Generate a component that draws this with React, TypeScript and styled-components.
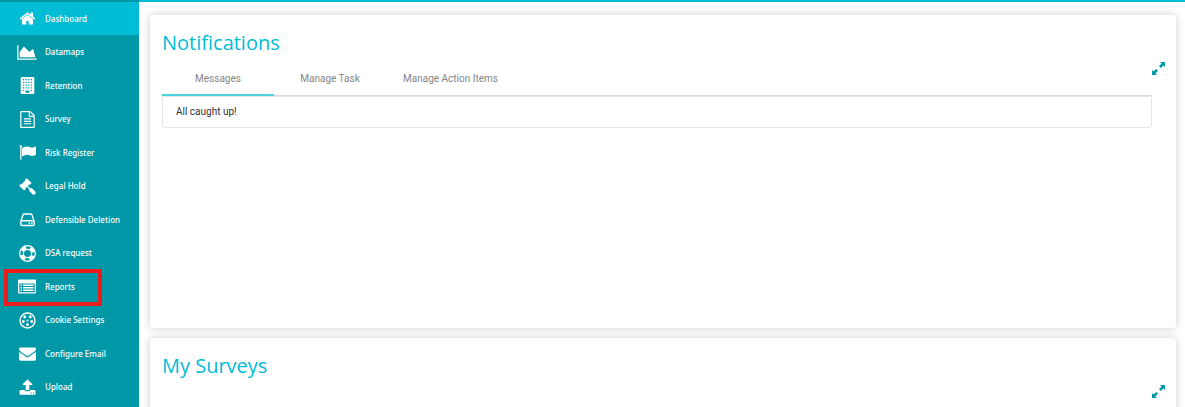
import React from "react";
import styled, { createGlobalStyle } from "styled-components";

const GlobalStyle = createGlobalStyle`
  *, *::before, *::after { box-sizing: border-box; }
  html, body { margin: 0; background: #fff; }
  body { font-family: Roboto, "Liberation Sans", sans-serif; font-size: 10px; overflow: hidden; }
`;

const Page = styled.div`
  display: grid;
  grid-template-columns: 139px minmax(0, 1fr);
  height: 100vh;
  overflow: hidden;
`;

const Sidebar = styled.nav`
  background: #0097a7;
  padding-top: 2px;
`;

const Menu = styled.ul`
  display: grid;
  grid-auto-rows: 33px 34px;
  list-style: none;
  margin: 0;
  padding: 0;
`;

const MenuItem = styled.li`
  display: grid;
  position: relative;
`;

const MenuLink = styled.a<{ $active?: boolean }>`
  display: grid;
  grid-template-columns: 20px 1fr;
  column-gap: 8px;
  align-items: center;
  padding-left: 17px;
  background: ${(p) => (p.$active ? "#00bcd4" : "transparent")};
  color: #fff;
  font-family: "Noto Sans", "Open Sans", sans-serif;
  font-size: 8px;
  font-weight: 500;
  line-height: 12px;
  text-decoration: none;
  white-space: nowrap;
`;

const Glyph = styled.svg<{ $wide?: boolean }>`
  width: ${(p) => (p.$wide ? 20 : 17)}px;
  height: 17px;
  justify-self: center;
  fill: #fff;
`;

const Highlight = styled.span`
  position: absolute;
  left: 4px;
  top: -1px;
  width: 98px;
  height: 37px;
  border: 4px solid #ed1c1c;
  pointer-events: none;
`;

const Main = styled.main`
  display: flex;
  flex-direction: column;
  gap: 10px;
  padding: 13px 9px 0 11px;
  border-top: 2px solid #00bcd4;
`;

const Card = styled.section`
  display: grid;
  grid-template-columns: minmax(0, 1fr) 24px;
  grid-template-rows: auto 1fr;
  flex: none;
  min-height: 313px;
  padding-left: 12px;
  background: #fff;
  border-radius: 3px;
  box-shadow: 0 0 8px rgba(0, 0, 0, 0.2);
`;

const CardTitle = styled.h2`
  grid-column: 1 / -1;
  margin: 0;
  padding-top: 14px;
  color: #00bcd4;
  font-family: "Open Sans", "Noto Sans", sans-serif;
  font-size: 20px;
  font-weight: 400;
  line-height: 28px;
`;

const Tabs = styled.div`
  display: flex;
  margin-top: 5px;
  border-bottom: 1px solid #dcdcdc;
`;

const Tab = styled.button<{ $active?: boolean }>`
  min-width: 112px;
  height: 34px;
  margin-bottom: -1px;
  padding: 2px 17px 0;
  border: 0;
  border-bottom: 2px solid ${(p) => (p.$active ? "#4dd0e1" : "transparent")};
  background: none;
  color: #858585;
  font-family: inherit;
  font-size: 10px;
  line-height: 16px;
`;

const Message = styled.p`
  margin: 0;
  padding: 7px 13px;
  border: 1px solid #e6e6e6;
  border-radius: 0 0 3px 3px;
  color: #333;
  line-height: 16px;
`;

const ExpandButton = styled.button`
  grid-column: 2;
  align-self: start;
  width: 13px;
  height: 13px;
  margin-top: 5px;
  padding: 0;
  border: 0;
  background: none;
`;

const ExpandGlyph = styled.svg`
  display: block;
  width: 13px;
  height: 13px;
  fill: #0097a7;
`;

const icons: Record<string, { box: string; wide?: boolean; art: React.ReactNode }> = {
  home: {
    box: "0 0 1792 1792",
    art: <path d="M1472 992v480q0 26-19 45t-45 19h-384v-384h-256v384h-384q-26 0-45-19t-19-45v-480q0-1 .5-3t.5-3l575-474 575 474q1 2 1 6zm223-69l-62 74q-8 9-21 11h-3q-13 0-21-7l-692-577-692 577q-12 8-24 7-13-2-21-11l-62-74q-8-10-7-23.5t11-21.5l719-599q32-26 76-26t76 26l244 204v-195q0-14 9-23t23-9h192q14 0 23 9t9 23v408l219 182q10 8 11 21.5t-7 23.5z" />,
  },
  chart: {
    box: "0 0 2048 1792",
    wide: true,
    art: <path d="M2048 1536v128h-2048v-1536h128v1408h1920zm-384-1024l256 896h-1664v-576l448-576 576 576z" />,
  },
  building: {
    box: "0 0 17 17",
    art: (
      <>
        <path
          fillRule="evenodd"
          d="M2.500 0h12a.8.8 0 0 1 .8.8v15.400a.8.8 0 0 1-.8.8h-12a.8.8 0 0 1-.8-.8V.8a.8.8 0 0 1 .8-.8zM6.600 13.600v2.200h3.800v-2.200z"
        />
        <path
          d="M4 2.700h9.500M4 5.400h9.500M4 8.100h9.500M4 10.800h9.500M4 13.500h1.200M11.800 13.500h1.200"
          fill="none"
          stroke="#0097a7"
          strokeWidth="1.200"
          strokeDasharray="1.200 1.400"
        />
      </>
    ),
  },
  file: {
    box: "0 0 1792 1792",
    art: <path d="M1596 380q28 28 48 76t20 88v1152q0 40-28 68t-68 28h-1344q-40 0-68-28t-28-68v-1600q0-40 28-68t68-28h896q40 0 88 20t76 48zm-444-244v376h376q-10-29-22-41l-313-313q-12-12-41-22zm384 1528v-1024h-416q-40 0-68-28t-28-68v-416h-768v1536h1280zm-1024-864q0-14 9-23t23-9h704q14 0 23 9t9 23v64q0 14-9 23t-23 9h-704q-14 0-23-9t-9-23v-64zm736 224q14 0 23 9t9 23v64q0 14-9 23t-23 9h-704q-14 0-23-9t-9-23v-64q0-14 9-23t23-9h704zm0 256q14 0 23 9t9 23v64q0 14-9 23t-23 9h-704q-14 0-23-9t-9-23v-64q0-14 9-23t23-9h704z" />,
  },
  flag: {
    box: "0 0 1792 1792",
    art: <path d="M320 256q0 72-64 110v1266q0 13-9.500 22.500t-22.500 9.500h-64q-13 0-22.500-9.500t-9.500-22.500v-1266q-64-38-64-110 0-53 37.500-90.500t90.500-37.500 90.500 37.500 37.500 90.500zm1472 64v763q0 25-12.500 38.500t-39.500 27.500q-215 116-369 116-61 0-123.500-22t-108.500-48-115.500-48-142.500-22q-192 0-464 146-17 9-33 9-26 0-45-19t-19-45v-742q0-32 31-55 21-14 79-43 236-120 421-120 107 0 200 29t219 88q38 19 88 19 54 0 117.500-21t110-47 88-47 54.500-21q26 0 45 19t19 45z" />,
  },
  gavel: {
    box: "0 0 1792 1792",
    art: <path d="M1771 1536q0 53-37 90l-107 108q-39 37-91 37-53 0-90-37l-363-364q-38-36-38-90 0-53 43-96l-256-256-126 126q-14 14-34 14t-34-14q2 2 12.500 12t12.500 13 10 11.500 10 13.500 6 13.500 5.500 16.500 1.500 18q0 38-28 68-3 3-16.500 18t-19 20.500-18.500 16.500-22 15.500-22 9-26 4.500q-40 0-68-28l-408-408q-28-28-28-68 0-13 4.500-26t9-22 15.500-22 16.500-18.500 20.500-19 18-16.500q30-28 68-28 10 0 18 1.500t16.500 5.500 13.500 6 13.500 10 11.500 10 13 12.500 12 12.500q-14-14-14-34t14-34l348-348q14-14 34-14t34 14q-2-2-12.500-12t-12.500-13-10-11.500-10-13.500-6-13.500-5.500-16.500-1.500-18q0-38 28-68 3-3 16.500-18t19-20.500 18.500-16.500 22-15.500 22-9 26-4.500q40 0 68 28l408 408q28 28 28 68 0 13-4.500 26t-9 22-15.500 22-16.500 18.500-20.500 19-18 16.500q-30 28-68 28-10 0-18-1.500t-16.500-5.500-13.500-6-13.500-10-11.500-10-13-12.500-12-12.500q14 14 14 34t-14 34l-126 126 256 256q43-43 96-43 52 0 91 37l363 363q37 39 37 91z" />,
  },
  drive: {
    box: "0 0 17 17",
    art: (
      <>
        <path d="M1.900 10L4 3.900q.3-.9 1.200-.9h6.600q.9 0 1.200.9l2.100 6.100v3.500q0 1-1 1H2.900q-1 0-1-1zM2 9.800h13" fill="none" stroke="#fff" strokeWidth="1.400" />
        <circle cx="10.300" cy="12.100" r=".9" />
        <circle cx="12.800" cy="12.100" r=".9" />
      </>
    ),
  },
  ring: {
    box: "0 0 17 17",
    art: (
      <>
        <circle cx="8.500" cy="8.500" r="7.800" fill="none" stroke="#fff" strokeWidth="1.300" />
        <circle cx="8.500" cy="8.500" r="4.100" fill="none" stroke="#fff" strokeWidth="1.200" />
        <circle cx="8.500" cy="8.500" r="5.800" fill="none" stroke="#fff" strokeWidth="3.600" strokeDasharray="4.800 4.311" strokeDashoffset="-2.156" />
      </>
    ),
  },
  list: {
    box: "0 0 20 17",
    wide: true,
    art: (
      <>
        <path fillRule="evenodd" d="M2 1.500h16a1 1 0 0 1 1 1v12a1 1 0 0 1-1 1H2a1 1 0 0 1-1-1v-12a1 1 0 0 1 1-1zM2.300 5.500v8.700h15.400V5.500z" />
        <path d="M3.500 6.600H5V8H3.500zM6 6.600h10.500V8H6zM3.500 9.100H5v1.400H3.500zM6 9.100h10.500v1.400H6zM3.500 11.600H5V13H3.500zM6 11.600h10.500V13H6z" />
      </>
    ),
  },
  cookie: {
    box: "0 0 17 17",
    art: (
      <>
        <circle cx="8.500" cy="8.500" r="7.500" fill="none" stroke="#fff" strokeWidth="1.400" />
        <circle cx="8.500" cy="8.500" r="1" />
        <circle cx="5.700" cy="5" r="1.400" />
        <circle cx="11.300" cy="5" r="1.400" />
        <circle cx="4.300" cy="9.500" r="1.400" />
        <circle cx="12.700" cy="9.500" r="1.400" />
        <circle cx="8.500" cy="12.700" r="1.400" />
      </>
    ),
  },
  mail: {
    box: "0 0 1792 1792",
    art: <path d="M1792 710v794q0 66-47 113t-113 47h-1472q-66 0-113-47t-47-113v-794q44 49 101 87 362 246 497 345 57 42 92.500 65.500t94.500 48 110 24.500h2q51 0 110-24.500t94.500-48 92.500-65.500q170-123 498-345 57-39 100-87zm0-294q0 79-49 151t-122 123q-376 261-468 325-10 7-42.500 31t-54 38.500-52 32.500-57.500 27-50 9h-2q-23 0-50-9t-57.500-27-52-32.500-54-38.500-42.500-31q-91-64-262-182.500t-205-142.500q-62-42-117-115.500t-55-136.500q0-78 41.500-130t118.500-52h1472q65 0 112.500 47t47.500 113z" />,
  },
  upload: {
    box: "0 0 1792 1792",
    art: <path d="M1344 1472q0-26-19-45t-45-19-45 19-19 45 19 45 45 19 45-19 19-45zm256 0q0-26-19-45t-45-19-45 19-19 45 19 45 45 19 45-19 19-45zm128-224v320q0 40-28 68t-68 28h-1472q-40 0-68-28t-28-68v-320q0-40 28-68t68-28h427q21 56 70.500 92t110.500 36h256q61 0 110.500-36t70.500-92h427q40 0 68 28t28 68zm-325-648q-17 40-59 40h-256v448q0 26-19 45t-45 19h-256q-26 0-45-19t-19-45v-448h-256q-42 0-59-40-17-39 14-69l448-448q18-19 45-19t45 19l448 448q31 30 14 69z" />,
  },
};

const menu = [
  { label: "Dashboard", icon: "home", active: true },
  { label: "Datamaps", icon: "chart" },
  { label: "Retention", icon: "building" },
  { label: "Survey", icon: "file" },
  { label: "Risk Register", icon: "flag" },
  { label: "Legal Hold", icon: "gavel" },
  { label: "Defensible Deletion", icon: "drive" },
  { label: "DSA request", icon: "ring" },
  { label: "Reports", icon: "list", marked: true },
  { label: "Cookie Settings", icon: "cookie" },
  { label: "Configure Email", icon: "mail" },
  { label: "Upload", icon: "upload" },
];

const tabs = ["Messages", "Manage Task", "Manage Action Items"];

function Expand({ label }: { label: string }) {
  return (
    <ExpandButton type="button" aria-label={label}>
      <ExpandGlyph viewBox="0 0 13 13" aria-hidden="true">
        <path d="M8 0h5v5l-1.600-1.600-2.600 2.600-1.800-1.800 2.600-2.600zM0 13V8l1.600 1.600L4.200 7 6 8.800l-2.600 2.600L5 13z" />
      </ExpandGlyph>
    </ExpandButton>
  );
}

export default function App() {
  return (
    <>
      <GlobalStyle />
      <Page>
        <Sidebar>
          <Menu>
            {menu.map((item) => (
              <MenuItem key={item.label}>
                <MenuLink href="#" $active={item.active}>
                  <Glyph viewBox={icons[item.icon].box} $wide={icons[item.icon].wide} aria-hidden="true">
                    {icons[item.icon].art}
                  </Glyph>
                  {item.label}
                </MenuLink>
                {item.marked && <Highlight />}
              </MenuItem>
            ))}
          </Menu>
        </Sidebar>
        <Main>
          <Card>
            <CardTitle>Notifications</CardTitle>
            <div>
              <Tabs role="tablist">
                {tabs.map((tab, i) => (
                  <Tab key={tab} type="button" role="tab" aria-selected={i === 0} $active={i === 0}>
                    {tab}
                  </Tab>
                ))}
              </Tabs>
              <Message>All caught up!</Message>
            </div>
            <Expand label="Expand notifications" />
          </Card>
          <Card>
            <CardTitle>My Surveys</CardTitle>
            <Expand label="Expand surveys" />
          </Card>
        </Main>
      </Page>
    </>
  );
}
